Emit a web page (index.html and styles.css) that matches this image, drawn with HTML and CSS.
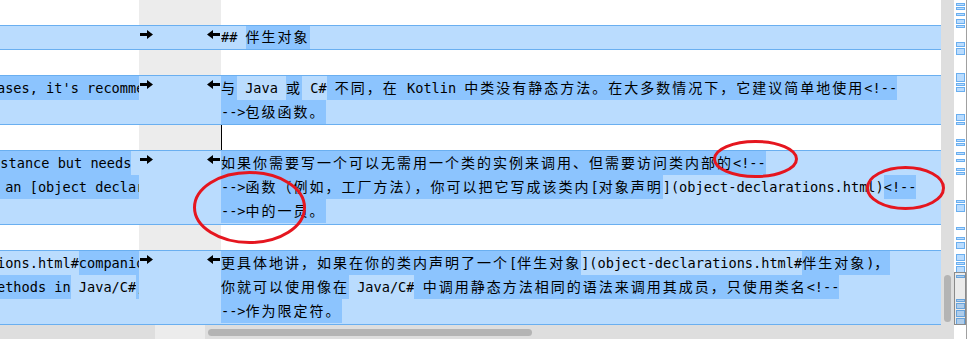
FILE: index.html
```html
<!DOCTYPE html>
<html lang="zh">
<head>
  <meta charset="UTF-8">
  <title>Diff</title>
  <link rel="stylesheet" href="styles.css">
</head>
<body>
  <div class="app">
    <div class="panes">
      <div class="rows">
        <div class="row blank"><div class="left"></div><div class="gutter"></div><div class="right"></div></div>

        <div class="row change one">
          <div class="left"><div class="line"></div></div>
          <div class="gutter">
            <svg class="arr" viewBox="0 0 13 9"><path d="M0 3h7V0l6 4.5L7 9V6H0z"/></svg>
            <svg class="arr" viewBox="0 0 13 9"><path d="M13 3H6V0L0 4.5 6 9V6h7z"/></svg>
          </div>
          <div class="right">
            <div class="line">## <span class="hl"><span class="cjk">伴生对象</span></span></div>
          </div>
        </div>

        <div class="row blank"><div class="left"></div><div class="gutter"></div><div class="right"></div></div>

        <div class="row change two">
          <div class="left">
            <div class="line"><span class="hl">ases, it's recommended to simply use package-level functions instead.</span></div>
            <div class="line"></div>
          </div>
          <div class="gutter">
            <svg class="arr" viewBox="0 0 13 9"><path d="M0 3h7V0l6 4.5L7 9V6H0z"/></svg>
            <svg class="arr" viewBox="0 0 13 9"><path d="M13 3H6V0L0 4.5 6 9V6h7z"/></svg>
          </div>
          <div class="right">
            <div class="line"><span class="hl"><span class="cjk">与</span></span> Java <span class="hl"><span class="cjk">或</span></span> C#<span class="hl"> <span class="cjk">不同，在</span> Kotlin <span class="cjk">中类没有静态方法。在大多数情况下，它建议简单地使用</span>&lt;!--</span></div>
            <div class="line"><span class="hl">--&gt;<span class="cjk">包级函数。</span></span></div>
          </div>
        </div>

        <div class="row blank"><div class="left"></div><div class="gutter"></div><div class="right cursor"></div></div>

        <div class="row change three">
          <div class="left">
            <div class="line cut"><span class="hl">instance but needs</span></div>
            <div class="line"><span class="hl"> an [object declaration](object-declarations.html) inside that class.</span></div>
            <div class="line"></div>
          </div>
          <div class="gutter">
            <svg class="arr" viewBox="0 0 13 9"><path d="M0 3h7V0l6 4.5L7 9V6H0z"/></svg>
            <svg class="arr" viewBox="0 0 13 9"><path d="M13 3H6V0L0 4.5 6 9V6h7z"/></svg>
          </div>
          <div class="right">
            <div class="line"><span class="hl"><span class="cjk">如果你需要写一个可以无需用一个类的实例来调用、但需要访问类内部的</span>&lt;!--</span></div>
            <div class="line"><span class="hl">--&gt;<span class="cjk">函数（例如，工厂方法），你可以把它写成该类内</span>[<span class="cjk">对象声明</span></span>](object-declarations.html)<span class="hl">&lt;!--</span></div>
            <div class="line"><span class="hl">--&gt;<span class="cjk">中的一员。</span></span></div>
          </div>
        </div>

        <div class="row blank"><div class="left"></div><div class="gutter"></div><div class="right"></div></div>

        <div class="row change three">
          <div class="left">
            <div class="line">ions.html#<span class="hl">companion-objects) inside your class,</span></div>
            <div class="line"><span class="hl">ethods in</span> Java/C#<span class="hl">, using only the class name as a qualifier.</span></div>
            <div class="line"></div>
          </div>
          <div class="gutter">
            <svg class="arr" viewBox="0 0 13 9"><path d="M0 3h7V0l6 4.5L7 9V6H0z"/></svg>
            <svg class="arr" viewBox="0 0 13 9"><path d="M13 3H6V0L0 4.5 6 9V6h7z"/></svg>
          </div>
          <div class="right">
            <div class="line"><span class="hl"><span class="cjk">更具体地讲，如果在你的类内声明了一个</span>[<span class="cjk">伴生对象</span></span>](object-declarations.html#<span class="hl"><span class="cjk">伴生对象</span>)<span class="cjk">，</span></span></div>
            <div class="line"><span class="hl"><span class="cjk">你就可以使用像在</span></span> Java/C#<span class="hl"> <span class="cjk">中调用静态方法相同的语法来调用其成员，只使用类名</span>&lt;!--</span></div>
            <div class="line"><span class="hl">--&gt;<span class="cjk">作为限定符。</span></span></div>
          </div>
        </div>
      </div>

      <div class="hbar">
        <div class="hbar-left"></div>
        <div class="hbar-gap"></div>
        <div class="hbar-right"><div class="hthumb"></div></div>
      </div>
    </div>

    <div class="vbar"><div class="vthumb"></div></div>

    <!-- overview of all changes -->
    <div class="map">
      <div class="mark" style="top:3px;height:3px"></div>
      <div class="mark" style="top:7px;height:3px"></div>
      <div class="mark" style="top:13px;height:3px"></div>
      <div class="mark" style="top:19px;height:5px"></div>
      <div class="mark" style="top:25px;height:3px"></div>
      <div class="mark" style="top:42px;height:5px"></div>
      <div class="mark" style="top:48px;height:7px"></div>
      <div class="mark" style="top:73px;height:9px"></div>
      <div class="mark" style="top:83px;height:3px"></div>
      <div class="mark" style="top:87px;height:5px"></div>
      <div class="mark" style="top:114px;height:7px"></div>
      <div class="mark" style="top:122px;height:3px"></div>
      <div class="mark" style="top:139px;height:3px"></div>
      <div class="mark" style="top:143px;height:3px"></div>
      <div class="mark" style="top:152px;height:3px"></div>
      <div class="mark" style="top:159px;height:3px"></div>
      <div class="mark" style="top:168px;height:3px"></div>
      <div class="mark" style="top:172px;height:3px"></div>
      <div class="mark" style="top:200px;height:3px"></div>
      <div class="mark" style="top:204px;height:8px"></div>
      <div class="mark" style="top:227px;height:3px"></div>
      <div class="mark" style="top:237px;height:3px"></div>
      <div class="mark" style="top:242px;height:7px"></div>
      <div class="mark" style="top:254px;height:7px"></div>
      <div class="mark" style="top:262px;height:3px"></div>
      <div class="mark" style="top:266px;height:7px"></div>
      <div class="mark" style="top:275px;height:3px"></div>
      <div class="mark" style="top:299px;height:3px"></div>
      <div class="mark" style="top:303px;height:6px"></div>
      <div class="mark" style="top:310px;height:7px"></div>
      <div class="mark" style="top:318px;height:7px"></div>
      <div class="view"></div>
    </div>

    <!-- hand-drawn annotations -->
    <svg class="notes" width="967" height="339">
      <ellipse cx="755.5" cy="159" rx="41" ry="17.5"/>
      <ellipse cx="905.5" cy="188" rx="38" ry="20.5"/>
      <ellipse cx="249.5" cy="207.5" rx="55" ry="35"/>
    </svg>
  </div>
</body>
</html>
```

FILE: styles.css
```css
/* General styles */
body {
  margin: 0;
  background: #fff;
  color: #000;
  font-family: "DejaVu Sans Mono", monospace;
  font-size: 13.6px;
}

.app {
  position: relative;
  display: flex;
  width: 967px;
  height: 339px;
  overflow: hidden;
}

.panes {
  width: 941px;
  display: flex;
  flex-direction: column;
}

.rows {
  height: 325px;
}

/* Diff rows */
.row {
  display: grid;
  grid-template-columns: 139px 82px 720px;
  box-sizing: border-box;
}

.blank {
  height: 25px;
}

.blank .gutter {
  background: #ececec;
}

.cursor {
  border-left: 1px solid #000;
}

.change {
  background: #badcfe;
  border-top: 1px solid #6aaff0;
  border-bottom: 1px solid #6aaff0;
}

.left,
.right {
  overflow: hidden;
}

.line {
  height: 24px;
  line-height: 24px;
  white-space: pre;
}

.one .line {
  height: 23px;
  line-height: 23px;
}

.three .line:last-child {
  height: 25px;
}

.left .line {
  margin-left: -3px;
}

.left .cut {
  margin-left: -16px;
}

.hl {
  display: inline-block;
  background: #8cc4fe;
}

.cjk {
  font-family: "Noto Sans CJK SC", sans-serif;
  font-size: 14px;
  line-height: 1;
  letter-spacing: 2px;
}

.gutter {
  display: flex;
  justify-content: space-between;
  align-items: flex-start;
  padding: 4px 1px 0;
}

.arr {
  width: 13px;
  height: 9px;
  fill: #000;
}

/* Scrollbars */
.hbar {
  display: flex;
  height: 14px;
}

.hbar-left {
  width: 155px;
  background: #dedede;
}

.hbar-gap {
  width: 50px;
  background: #ececec;
}

.hbar-right {
  flex: 1;
  background: #dedede;
  padding: 4px 0 0 3px;
}

.hthumb {
  width: 324px;
  height: 7px;
  border-radius: 4px;
  background: #b4b4b4;
}

.vbar {
  width: 13px;
  background: #dedede;
  padding: 275px 0 0 3px;
  box-sizing: border-box;
}

.vthumb {
  width: 7px;
  height: 47px;
  border-radius: 4px;
  background: #b4b4b4;
}

/* Overview map */
.map {
  position: relative;
  width: 13px;
  background: #fff;
  border-right: 1px solid #a0a0a0;
  box-sizing: border-box;
}

.mark {
  position: absolute;
  left: 2px;
  width: 9px;
  box-sizing: border-box;
  border: 1px solid #6aaff0;
  background: #badcfe;
}

.view {
  position: absolute;
  left: 0;
  top: 272px;
  width: 12px;
  height: 53px;
  box-sizing: border-box;
  border: 1px solid #8a8a8a;
  background: rgba(90, 90, 90, 0.12);
}

/* Red annotation rings */
.notes {
  position: absolute;
  top: 0;
  left: 0;
  pointer-events: none;
}

.notes ellipse {
  fill: none;
  stroke: #e5161f;
  stroke-width: 3;
}
```
